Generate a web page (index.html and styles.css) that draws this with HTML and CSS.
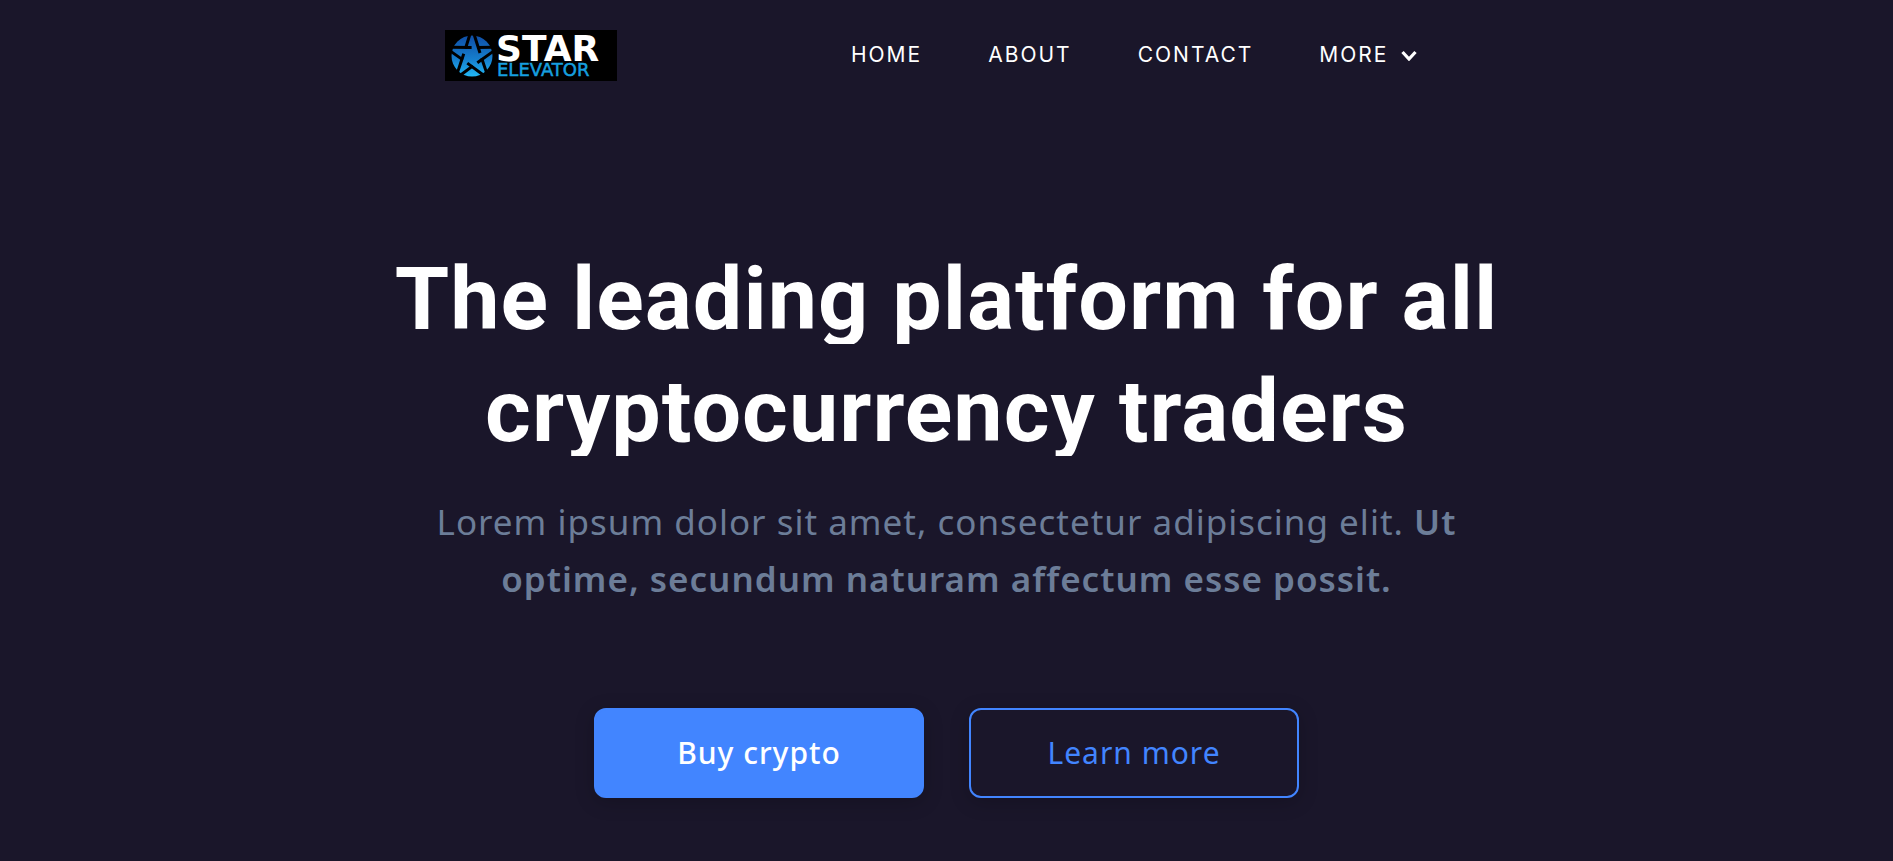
FILE: index.html
```html
<!DOCTYPE html>
<html lang="en">
<head>
<meta charset="utf-8">
<title>Star Elevator</title>
<link rel="stylesheet" href="styles.css">
</head>
<body>
<header class="header">
  <a class="brand" href="#" aria-label="Star Elevator">
    <svg class="logo" viewBox="0 0 172 51" role="img" aria-label="Star Elevator">
      <defs>
        <linearGradient id="shade" x1="0" y1="0" x2="0" y2="1">
          <stop offset="0" stop-color="#0f4ea6"/>
          <stop offset="0.600" stop-color="#1680cf"/>
          <stop offset="1" stop-color="#22b8f5"/>
        </linearGradient>
      </defs>
      <rect width="172" height="51" fill="#000"/>
      <circle cx="27" cy="26" r="20.500" fill="url(#shade)"/>
      <g fill="none" stroke="#000" stroke-width="3">
        <path id="arm" d="M25 4L20.500 18.500M29 4L35 23"/>
        <use href="#arm" transform="rotate(72 27 26)"/>
        <use href="#arm" transform="rotate(144 27 26)"/>
        <use href="#arm" transform="rotate(216 27 26)"/>
        <use href="#arm" transform="rotate(288 27 26)"/>
      </g>
      <text class="logo-star" x="51" y="31">STAR</text>
      <text class="logo-elevator" x="52" y="46">ELEVATOR</text>
    </svg>
  </a>
  <nav class="nav" aria-label="Main">
    <a href="#">HOME</a>
    <a href="#">ABOUT</a>
    <a href="#">CONTACT</a>
    <button class="more" type="button">MORE
      <svg class="chevron" viewBox="0 0 16 12" aria-hidden="true"><path d="M1.500 3L8 10L14.500 3" fill="none" stroke="currentColor" stroke-width="3.200"/></svg>
    </button>
  </nav>
</header>
<main class="hero">
  <h1 class="title"><span>The leading platform for all cryptocurrency traders</span></h1>
  <p class="lead">Lorem ipsum dolor sit amet, consectetur adipiscing elit. <strong>Ut optime, secundum naturam affectum esse possit.</strong></p>
  <div class="actions">
    <button class="btn btn-primary" type="button">Buy crypto</button>
    <button class="btn btn-outline" type="button">Learn more</button>
  </div>
</main>
</body>
</html>
```
FILE: styles.css
```css
* { box-sizing: border-box; }
body {
  margin: 0;
  min-height: 100vh;
  background: #1a162a;
  color: #fff;
  font-family: "Noto Sans", "Open Sans", sans-serif;
}
.header {
  display: flex;
  justify-content: space-between;
  align-items: center;
  max-width: 1004px;
  margin: 0 auto;
  padding: 30px 0;
}
.brand { display: block; }
.logo { display: block; width: 172px; height: 51px; overflow: visible; }
.logo-star { font: bold 36px "DejaVu Sans", sans-serif; fill: #fff; }
.logo-elevator { font: 18px "DejaVu Sans", sans-serif; fill: #169fdf; stroke: #169fdf; stroke-width: 0.5px; }
.nav { display: flex; align-items: center; gap: 66px; padding: 0 32px 2px 0; }
.nav a, .more {
  font: 21px/28px Inter, sans-serif;
  letter-spacing: 2px;
  color: #fff;
  text-decoration: none;
}
.more { display: flex; align-items: center; gap: 12px; padding: 0; border: 0; background: none; }
.chevron { width: 16px; height: 12px; }
.hero {
  display: flex;
  flex-direction: column;
  align-items: center;
  max-width: 1200px;
  margin: 0 auto;
  padding-top: 132px;
  text-align: center;
}
.title { margin: 0; font: bold 88px/112px Roboto, sans-serif; letter-spacing: 1px; }
.title span {
  -webkit-box-decoration-break: clone;
  box-decoration-break: clone;
  background: linear-gradient(#fff, #fff) no-repeat 0 0 / 100% 97px;
  -webkit-background-clip: text;
  background-clip: text;
  color: transparent;
}
.lead {
  max-width: 1080px;
  margin: 26px 0 101px;
  font-size: 35px;
  line-height: 57px;
  letter-spacing: 1px;
  color: #6c7d98;
}
.lead strong { font-weight: 600; }
.actions { display: flex; gap: 45px; }
.btn {
  width: 330px;
  height: 90px;
  border: 2px solid #4285ff;
  border-radius: 12px;
  box-shadow: 0 4px 20px rgba(0, 0, 0, .2);
  font: 500 30px/40px "Noto Sans", sans-serif;
  letter-spacing: 1px;
}
.btn-primary { background: #4285ff; color: #fff; }
.btn-outline { background: transparent; color: #4285ff; font-weight: 400; }
```
